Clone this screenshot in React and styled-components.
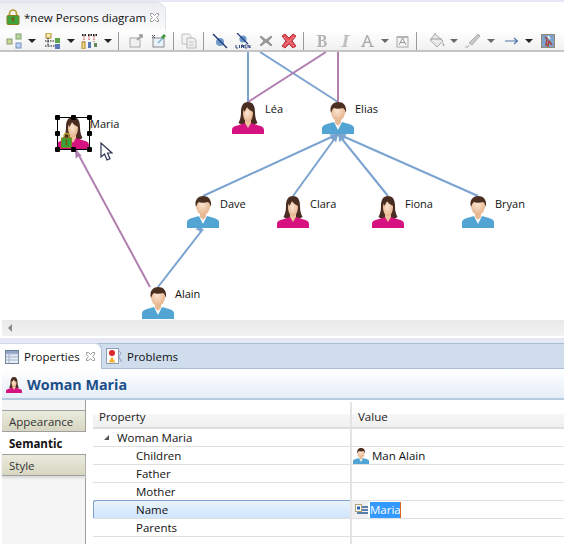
import React from 'react';
import styled, { createGlobalStyle } from 'styled-components';

const Global = createGlobalStyle`
  html, body { margin: 0; padding: 0; background: #e6e9f5; overflow: hidden; }
  body { font-family: "Open Sans", "Noto Sans", "Liberation Sans", sans-serif; font-size: 12px; color: #111; }
  * { box-sizing: border-box; }
`;

const Page = styled.div`
  width: 564px; height: 544px; display: flex; flex-direction: column; padding-top: 2px; background: #e6e9f5;
`;
const Editor = styled.section`
  height: 336px; background: #fff; display: flex; flex-direction: column; flex: none;
`;
const TabStrip = styled.div`height: 28px; display: flex; flex: none; background: #fff;`;
const EditorTab = styled.div`
  width: 166px; height: 28px; display: flex; align-items: center; padding: 1px 0 0 6px; gap: 4px; white-space: nowrap;
  background: linear-gradient(#eceef1, #f5f6f7 70%, #fbfbfb); border-top-right-radius: 9px;
  border-top: 1px solid #dde0ea; border-right: 1px solid #dfe2ea; font-size: 11.5px;
`;
const TabTitle = styled.span`width: 121px; flex: none;`;
const CloseMark = styled.svg`width: 11px; height: 11px; flex: none;`;
const Toolbar = styled.div`
  height: 22px; flex: none; display: flex; align-items: center; padding: 1px 0 0 6px;
  background: linear-gradient(#fff, #f1f1f1); border-bottom: 2px solid #c4c4c4;
`;
const ToolIcon = styled.svg`width: ${p => p.$w || 16}px; height: 16px; flex: none; margin-left: ${p => p.$ml || 0}px;`;
const Caret = styled.span`
  flex: none; width: 0; height: 0; margin-left: ${p => p.$ml || 6}px;
  border-left: 4px solid transparent; border-right: 4px solid transparent;
  border-top: 4px solid ${p => p.$off ? '#6a6a6a' : '#222'};
`;
const Sep = styled.span`flex: none; width: 1px; height: 18px; background: #9a9a9a; margin-left: ${p => p.$ml || 6}px;`;

const Canvas = styled.div`position: relative; flex: none; height: 268px; background: #fff; overflow: hidden;`;
const Edges = styled.svg`position: absolute; left: 0; top: 0; width: 564px; height: 268px;`;
const Node = styled.div`
  position: absolute; left: ${p => p.$x}px; top: ${p => p.$y}px; display: flex; width: 90px; height: 33px;
`;
const NodeLabel = styled.span`margin: ${p => p.$top || 0}px 0 0 1px; font-size: 11px; line-height: 15px; color: #111; height: 15px;`;
const Selection = styled.div`
  position: absolute; left: 57px; top: 65px; width: 33px; height: 33px; border: 1px solid #000;
  &::after { content: ''; position: absolute; left: 32px; top: 3px; width: 1px; height: 9px; background: #c9a85a; }
`;
const Handle = styled.i`
  position: absolute; width: 5px; height: 5px; background: #000; border-radius: 1px; z-index: 1;
  left: ${p => p.$x}px; top: ${p => p.$y}px;
`;
const LockBadge = styled.svg`position: absolute; left: 61px; top: 80px; width: 11px; height: 16px;`;
const Pointer = styled.svg`position: absolute; left: 100px; top: 90px; width: 13px; height: 19px;`;

const HScroll = styled.div`
  flex: none; height: 16px; margin-left: 2px; background: linear-gradient(#e9e9e9, #f1f1f1); display: flex; align-items: center; padding-left: 6px;
`;
const ScrollArrow = styled.span`
  width: 0; height: 0; border-top: 4px solid transparent; border-bottom: 4px solid transparent; border-right: 4px solid #8a8a8a;
`;

const PropsView = styled.section`
  margin-top: 5px; flex: 1; display: flex; flex-direction: column; background: #fff; min-height: 0; position: relative;
`;
const ViewTabs = styled.div`
  height: 26px; flex: none; display: flex; background: #cfdded; border-top: 1px solid #a9bdd4; border-bottom: 1px solid #a9bdd4;
`;
const ViewTab = styled.div`
  display: flex; align-items: center; gap: 5px; height: 26px; font-size: 11.5px; flex: none;
  margin-top: -1px; padding-left: ${p => p.$active ? 5 : 4}px; width: ${p => p.$w}px;
  ${p => p.$active ? 'background: #fff; border-top-right-radius: 7px; border-right: 1px solid #a9bdd4; border-top: 1px solid #cfd8e5;' : 'margin-top: 0; height: 24px;'}
`;
const ViewIcon = styled.svg`flex: none; width: ${p => p.$s}px; height: ${p => p.$s}px;`;
const Title = styled.header`
  height: 31px; flex: none; margin-left: 2px; display: flex; align-items: center; gap: 5px; padding: 2px 0 0 4px;
  background: linear-gradient(#fff, #e6eef7); border-bottom: 2px solid #b7cadf;
  font-family: "Open Sans", "Noto Sans", sans-serif; font-size: 14.3px; font-weight: 700; color: #1c4f89;
`;
const Body = styled.div`flex: 1; display: flex; min-height: 0;`;
const Sidebar = styled.nav`
  width: 84px; margin-left: 2px; flex: none; padding-top: 10px; background: #f5f5f5; border-right: 1px solid #9f9f9f;
`;
const SideTab = styled.div`
  height: 22px; display: flex; align-items: center; padding-left: 7px; font-size: 11.5px;
  ${p => p.$active
    ? 'background: #fff; font-weight: 700; margin-right: -1px; position: relative;'
    : 'background: linear-gradient(#ebebdd, #d6d6c2); border-top: 1px solid #a0a0a0; border-bottom: 1px solid #a0a0a0; color: #333;'}
  ${p => p.$last ? 'box-shadow: 0 2px 2px #d8d8d8;' : ''}
`;
const Table = styled.div`flex: 1; padding-left: 7px; padding-top: 2px; min-width: 0; background: #fff;`;
const HeaderRow = styled.div`
  display: grid; grid-template-columns: 257px 1fr; height: 27px; border-bottom: 2px solid #dedede;
  background: linear-gradient(#fff 0, #fff 12px, #f6f6f7 12px, #f0f0f1 100%);
`;
const HeaderCell = styled.div`
  height: 25px; padding: 7px 0 0 6px; line-height: 16px; font-size: 11.5px; color: #222;
  ${p => p.$value ? 'border-left: 2px solid #e4e4e4; padding-left: 6px;' : ''}
`;
const Row = styled.div`display: grid; grid-template-columns: 257px 1fr; height: 18px; border-bottom: 1px solid #e0e0e0;`;
const PropCell = styled.div`
  display: flex; align-items: center; height: 17px; padding-left: ${p => p.$indent}px; font-size: 11.5px; gap: 8px;
  ${p => p.$selected ? 'height: 18px; margin-top: -1px; background: linear-gradient(#e9f3fe, #cfe4fc); border-top: 1px solid #7da2ce; border-left: 1px solid #7da2ce; border-top-left-radius: 3px;' : ''}
`;
const ValueCell = styled.div`
  display: flex; align-items: center; height: 17px; border-left: 2px solid #e4e4e4; font-size: 11.5px; gap: 3px; padding-left: 1px;
`;
const Twisty = styled.span`
  width: 0; height: 0; border-left: 5px solid transparent; border-bottom: 5px solid #555; flex: none;
`;
const EditIconWrap = styled.span`
  display: flex; align-items: center; height: 17px; width: 16px; background: #efefef; margin: 0 -1px 0 -1px; padding-left: 3px; flex: none;
`;
const EditIcon = styled.svg`width: 13px; height: 11px; flex: none;`;
const SelectedText = styled.span`
  background: #3399ff; color: #fff; height: 16px; line-height: 16px; width: 31px; border-right: 1px solid #d9661f;
`;
const FillBelow = styled.div`height: 8px; display: grid; grid-template-columns: 257px 1fr;`;
const FillRule = styled.div`grid-column: 2; border-left: 2px solid #e4e4e4;`;
const PersonSvg = styled.svg`flex: none; display: block; width: ${p => p.$s}px; height: ${p => p.$s}px;`;
const LockSvg = styled.svg`flex: none; width: 14px; height: 16px;`;

const Person = ({ kind, size = 32 }) => {
  const woman = kind === 'woman';
  const gid = woman ? 'sk-w' : 'sk-m';
  return (
    <PersonSvg viewBox="0 0 32 32" $s={size}>
      <defs>
        <radialGradient id={gid} cx="45%" cy="40%" r="70%">
          <stop offset="0" stopColor="#fbe6d3" />
          <stop offset="1" stopColor="#e3ab80" />
        </radialGradient>
      </defs>
      {woman ? (
        <>
          <path d="M16 0C11 0 9 4 9 10c0 5-1 8-2.500 11 3 2 6 3 9.500 3s6.500-1 9.500-3C24 18 23 15 23 10c0-6-2-10-7-10z" fill="#4a2d22" />
          <path d="M0 28c0-3 3-4 7-5l6-2 3 3 3-3 6 2c4 1 7 2 7 5v4H0z" fill="#d5127f" />
          <path d="M13 18h6v3l-3 5-3-5z" fill="#eec3a0" />
          <path d="M11 11c0-3 2-6 6-6 2 1 3 3 4 5 0 6-2 10-5 10s-5-4-5-9z" fill={`url(#${gid})`} />
          <path d="M12 4c3-2 8-1 9 6-2-1-5-3-6-5-1 2-2 4-3 5z" fill="#4a2d22" />
        </>
      ) : (
        <>
          <path d="M0 26c0-2 2-3 5-4l7-2 4 5 4-5 7 2c3 1 5 2 5 4v6H0z" fill="#52a5d3" />
          <path d="M12 20l4 8 4-8z" fill="#fff" />
          <path d="M13 16h6v5l-3 3-3-3z" fill="#e8bb98" />
          <ellipse cx="16" cy="10" rx="7" ry="9" fill={`url(#${gid})`} />
          <path d="M9 11C7 4 11 0 16 0s9 3 8 11c-1-2-1-4-3-5-3 1-7 1-9 0-2 1-2 3-3 5z" fill="#4b2f20" />
        </>
      )}
    </PersonSvg>
  );
};

const Lock = () => (
  <LockSvg viewBox="0 0 14 16">
    <path d="M3.500 7V4.500a3.500 3.500 0 0 1 7 0V7" fill="none" stroke="#b59a2c" strokeWidth="1.600" />
    <rect x="1" y="6.500" width="12" height="9" rx="1" fill="#3fa23a" stroke="#8a7d1c" />
    <path d="M7 8v5M5.500 9.500h3" stroke="#7a5a10" strokeWidth="1.300" />
  </LockSvg>
);

const Close = () => (
  <CloseMark viewBox="0 0 11 11">
    <path d="M1.500 1.500h2L5.500 3.500l2-2h2v2l-2 2 2 2v2h-2l-2-2-2 2h-2v-2l2-2-2-2z" fill="#fff" stroke="#9a9a9a" />
  </CloseMark>
);

const handles = [[-3, -3], [13, -3], [29, -3], [-3, 13], [29, 13], [-3, 29], [13, 29], [29, 29]];

const people = [
  { n: 'Léa', k: 'woman', x: 232, y: 50, t: -1 },
  { n: 'Elias', k: 'man', x: 322, y: 50, t: -1 },
  { n: 'Dave', k: 'man', x: 187, y: 144, t: 0 },
  { n: 'Clara', k: 'woman', x: 277, y: 144, t: 0 },
  { n: 'Fiona', k: 'woman', x: 372, y: 144, t: 0 },
  { n: 'Bryan', k: 'man', x: 462, y: 144, t: 0 },
  { n: 'Alain', k: 'man', x: 142, y: 235, t: -1 },
  { n: 'Maria', k: 'woman', x: 57, y: 65, t: -1 },
];

const BLUE = '#7ba3d0';
const PURPLE = '#b07fb0';
const blueEdges = [
  [248, 0, 248, 50], [260, 0, 338, 50],
  [338, 82, 203, 144], [338, 82, 293, 144], [338, 82, 388, 144], [338, 82, 478, 144],
  [158, 235, 203, 177],
];
const purpleEdges = [[326, 0, 248, 50], [338, 0, 338, 50], [150, 235, 76, 98]];

const Arrow = ({ x, y, angle, color = BLUE }) => (
  <path d="M0 0l-8-3.500 1 3.500-1 3.500z" fill={color} transform={`translate(${x} ${y}) rotate(${angle})`} />
);

export default function App() {
  return (
    <Page>
      <Global />
      <Editor>
        <TabStrip>
          <EditorTab>
            <Lock />
            <TabTitle>*new Persons diagram</TabTitle>
            <Close />
          </EditorTab>
        </TabStrip>
        <Toolbar>
          <ToolIcon viewBox="0 0 16 16">
            <rect x="1" y="6" width="5" height="5" fill="#c9d88f" stroke="#8a9a78" />
            <rect x="10" y="1" width="5" height="5" fill="#b9d89f" stroke="#7fa070" />
            <rect x="10" y="10" width="5" height="5" fill="#c0d4f0" stroke="#6f8fc0" />
          </ToolIcon>
          <Caret $ml={6} />
          <ToolIcon $ml={9} viewBox="0 0 16 16">
            <rect x="1" y="0" width="5" height="5" fill="#f6e9b8" stroke="#b08a20" />
            <rect x="10" y="5" width="5" height="5" fill="#5da34a" />
            <rect x="10" y="11" width="5" height="5" fill="#5a78b8" />
            <path d="M3 5v3h7M3 8v5h7M0 8h3M0 13h3" stroke="#111" fill="none" strokeDasharray="1.500 1" />
          </ToolIcon>
          <Caret $ml={6} />
          <ToolIcon $ml={6} $w={17} viewBox="0 0 17 16">
            <path d="M3 3v13M8 3v4M13 3v6" stroke="#c33" strokeDasharray="1.500 1" />
            <path d="M1 2h5M7 2h9" stroke="#222" strokeWidth="2" strokeDasharray="1.500 1" />
            <rect x="1" y="9" width="3" height="7" fill="#f2d690" stroke="#b08a20" />
            <rect x="7" y="9" width="3" height="6" fill="#5a78b8" />
            <rect x="13" y="10" width="3" height="4" fill="#5d8a5a" />
          </ToolIcon>
          <Caret $ml={6} />
          <Sep $ml={6} />
          <ToolIcon $ml={10} $w={15} viewBox="0 0 15 16">
            <rect x="1" y="5" width="10" height="9" fill="#f0f0f0" stroke="#a8a8a8" />
            <path d="M8 7l5-5M10 2h3v3" stroke="#999" strokeWidth="1.600" fill="none" />
          </ToolIcon>
          <ToolIcon $ml={7} viewBox="0 0 16 16">
            <rect x="2" y="5" width="11" height="9" fill="#eaf2fa" stroke="#8a8a8a" />
            <path d="M1 2l3 3M4 2L1 5" stroke="#555" />
            <path d="M7 10l5-5" stroke="#7fb0d0" strokeWidth="1.400" />
            <path d="M10 4l3-3 2 2-3 3z" fill="#3f9a3f" />
          </ToolIcon>
          <Sep $ml={6} />
          <ToolIcon $ml={7} viewBox="0 0 16 16">
            <path d="M1 1h7l2 2v8H1z" fill="#f4f4f4" stroke="#c0c0c0" />
            <path d="M6 5h7l2 2v8H6z" fill="#f0f0f0" stroke="#b8b8b8" />
            <path d="M8 9h5M8 12h5" stroke="#c4c4c4" />
          </ToolIcon>
          <Sep $ml={6} />
          <ToolIcon $ml={8} viewBox="0 0 16 16">
            <circle cx="8" cy="9" r="4" fill="#6f9ac8" />
            <path d="M1 1l14 14" stroke="#1f3b7a" strokeWidth="1.400" />
          </ToolIcon>
          <ToolIcon $ml={7} viewBox="0 0 16 16">
            <circle cx="8" cy="6" r="3.600" fill="#6f9ac8" />
            <path d="M2 0l11 11" stroke="#1f3b7a" strokeWidth="1.200" />
            <path d="M1 12v3h2M4.500 12v3M6.500 15v-3h1.500v1.500H6.500M8.500 12v3M10 12h2M10 15h2M10 12v3M13 15v-3l2 3v-3" stroke="#1f3b7a" fill="none" strokeWidth=".9" />
          </ToolIcon>
          <ToolIcon $ml={8} $w={14} viewBox="0 0 14 16">
            <path d="M2 3l5 4 5-4 1 1-4 4 4 4-1 1-5-4-5 4-1-1 4-4-4-4z" fill="#999" stroke="#999" />
          </ToolIcon>
          <ToolIcon $ml={8} viewBox="0 0 16 16">
            <path d="M1 3l3-2 4 4 4-4 3 2-4 5 4 5-3 2-4-4-4 4-3-2 4-5z" fill="#e2505a" stroke="#c0303a" />
            <path d="M3 4l10 9M13 4L3 13" stroke="#fff" strokeDasharray="1 1" opacity=".6" />
          </ToolIcon>
          <Sep $ml={6} />
          <ToolIcon $ml={12} $w={12} viewBox="0 0 12 16">
            <path d="M1 2h6c4 0 4 5 1 5.500 4 .5 4 6.500-1 6.500H1v-1h1.500V3H1z M5 3v4h1c2 0 2-4 0-4zM5 8v5h1.500c2.500 0 2.500-5 0-5z" fill="#b4b4b4" fillRule="evenodd" />
          </ToolIcon>
          <ToolIcon $ml={11} $w={12} viewBox="0 0 12 16">
            <path d="M5 2h6l-.3 1H9L7 13h1.500l-.2 1H2l.2-1H4L6 3H4.800z" fill="#c0c0c0" />
          </ToolIcon>
          <ToolIcon $ml={10} $w={13} viewBox="0 0 13 16">
            <path d="M0 14v-1l1.200-.2L5.500 2h1.500l4.300 10.800 1.700.2v1H8.500v-1l1-.2-1-2.800H4l-1 2.800 1 .2v1zM4.500 8.500h3.500L6.200 4z" fill="#adadad" fillRule="evenodd" />
          </ToolIcon>
          <Caret $ml={7} $off />
          <ToolIcon $ml={7} $w={13} viewBox="0 0 13 16">
            <rect x="1" y="4" width="11" height="10" fill="#f5f5f5" stroke="#aaa" />
            <path d="M3 12l3.500-7L10 12M4 9.500h5M1 4h11" stroke="#999" fill="none" />
          </ToolIcon>
          <Sep $ml={7} />
          <ToolIcon $ml={12} viewBox="0 0 16 16">
            <path d="M6 1l8 7-6 6-7-7z" fill="#e8e8e8" stroke="#a8a8a8" />
            <path d="M6 1V0M2 6h11" stroke="#a0a0a0" />
            <path d="M14 9c1 2 2 3 1 4s-2-1-1-4z" fill="#aaa" />
          </ToolIcon>
          <Caret $ml={5} $off />
          <ToolIcon $ml={7} viewBox="0 0 16 16">
            <path d="M13 1l2 2-8 9-3-2z" fill="#c8c8c8" stroke="#b0b0b0" />
            <path d="M0 14h3M4 12l-1 2" stroke="#aaa" />
          </ToolIcon>
          <Caret $ml={6} $off />
          <ToolIcon $ml={10} $w={14} viewBox="0 0 14 16">
            <path d="M0 8h12M9 5l3.500 3L9 11" stroke="#4a70a8" strokeWidth="1.100" fill="none" />
          </ToolIcon>
          <Caret $ml={6} />
          <ToolIcon $ml={8} $w={14} viewBox="0 0 14 14">
            <rect x=".5" y=".5" width="13" height="13" fill="#7ea3cf" stroke="#8f8a70" />
            <path d="M4 3l2 2-1 6 2 1 1-5 3 4" stroke="#a8453a" strokeWidth="1.500" fill="none" />
            <path d="M7 2l2 3" stroke="#f4f4f4" strokeWidth="1.500" />
          </ToolIcon>
        </Toolbar>
        <Canvas>
          <Edges viewBox="0 0 564 268">
            {blueEdges.map(([a, b, c, d], i) => (
              <line key={i} x1={a} y1={b} x2={c} y2={d} stroke={BLUE} strokeWidth="2" />
            ))}
            {purpleEdges.map(([a, b, c, d], i) => (
              <line key={i} x1={a} y1={b} x2={c} y2={d} stroke={PURPLE} strokeWidth="2" />
            ))}
            <Arrow x={338} y={82} angle={-25} />
            <Arrow x={338} y={82} angle={-54} />
            <Arrow x={338} y={82} angle={-123} />
            <Arrow x={338} y={82} angle={-155} />
            <Arrow x={203} y={173} angle={-52} />
            <Arrow x={75} y={98} angle={-118} color={PURPLE} />
          </Edges>
          {people.map(p => (
            <Node key={p.n} $x={p.x} $y={p.y}>
              <Person kind={p.k} />
              <NodeLabel $top={p.t}>{p.n}</NodeLabel>
            </Node>
          ))}
          <Selection>
            {handles.map(([x, y]) => <Handle key={`${x}${y}`} $x={x} $y={y} />)}
          </Selection>
          <LockBadge viewBox="0 0 11 16">
            <path d="M3 7V4a2.500 2.500 0 0 1 5 0v3" fill="none" stroke="#b59a2c" strokeWidth="1.400" />
            <rect x=".5" y="6" width="10" height="9.500" fill="#35a33a" stroke="#8a7d1c" />
            <path d="M5.500 7.500v6M4 9h3M4 12h3" stroke="#7a5a10" />
          </LockBadge>
          <Pointer viewBox="0 0 13 19">
            <path d="M1 1v14l3.500-3 2.500 6 3-1.300L7.500 11H12z" fill="#fff" stroke="#2b3550" strokeWidth="1.200" />
          </Pointer>
        </Canvas>
        <HScroll><ScrollArrow /></HScroll>
      </Editor>
      <PropsView>
        <ViewTabs>
          <ViewTab $active $w={102}>
            <ViewIcon viewBox="0 0 14 14" $s={14}>
              <rect x=".5" y=".5" width="13" height="13" fill="#e9eef6" stroke="#6d7f9b" />
              <path d="M.5 4h13M.5 7h13M.5 10h13M4 4v9.500" stroke="#9fb0c8" />
              <rect x="1" y="1" width="12" height="2.500" fill="#8fa4c4" />
            </ViewIcon>
            <span>Properties</span>
            <Close />
          </ViewTab>
          <ViewTab $w={100}>
            <ViewIcon viewBox="0 0 16 16" $s={16}>
              <rect x=".5" y=".5" width="12" height="15" fill="#fff" stroke="#8e9cb4" />
              <circle cx="6" cy="5" r="3" fill="#d8262c" />
              <path d="M6 8.500l3.500 6h-7z" fill="#f4b23a" />
              <path d="M12.500 3c3 1 3 4 0 5l3 6" stroke="#8e9cb4" fill="none" />
            </ViewIcon>
            <span>Problems</span>
          </ViewTab>
        </ViewTabs>
        <Title>
          <Person kind="woman" size={16} />
          <span>Woman Maria</span>
        </Title>
        <Body>
          <Sidebar>
            <SideTab>Appearance</SideTab>
            <SideTab $active>Semantic</SideTab>
            <SideTab $last>Style</SideTab>
          </Sidebar>
          <Table>
            <HeaderRow>
              <HeaderCell>Property</HeaderCell>
              <HeaderCell $value>Value</HeaderCell>
            </HeaderRow>
            <Row>
              <PropCell $indent={11}><Twisty /><span>Woman Maria</span></PropCell>
              <ValueCell />
            </Row>
            <Row>
              <PropCell $indent={43}>Children</PropCell>
              <ValueCell><Person kind="man" size={16} /><span>Man Alain</span></ValueCell>
            </Row>
            <Row>
              <PropCell $indent={43}>Father</PropCell>
              <ValueCell />
            </Row>
            <Row>
              <PropCell $indent={43}>Mother</PropCell>
              <ValueCell />
            </Row>
            <Row>
              <PropCell $indent={42} $selected>Name</PropCell>
              <ValueCell>
                <EditIconWrap>
                  <EditIcon viewBox="0 0 13 11">
                    <rect x=".5" y=".5" width="6" height="7" fill="#fff" stroke="#b0a27a" />
                    <rect x="2" y="2.500" width="3" height="3" fill="#2a62a8" />
                    <path d="M7 3h6M7 6h6M2 9h11" stroke="#2a5a96" strokeWidth="1.400" />
                  </EditIcon>
                </EditIconWrap>
                <SelectedText>Maria</SelectedText>
              </ValueCell>
            </Row>
            <Row>
              <PropCell $indent={43}>Parents</PropCell>
              <ValueCell />
            </Row>
            <FillBelow><FillRule /></FillBelow>
          </Table>
        </Body>
      </PropsView>
    </Page>
  );
}
